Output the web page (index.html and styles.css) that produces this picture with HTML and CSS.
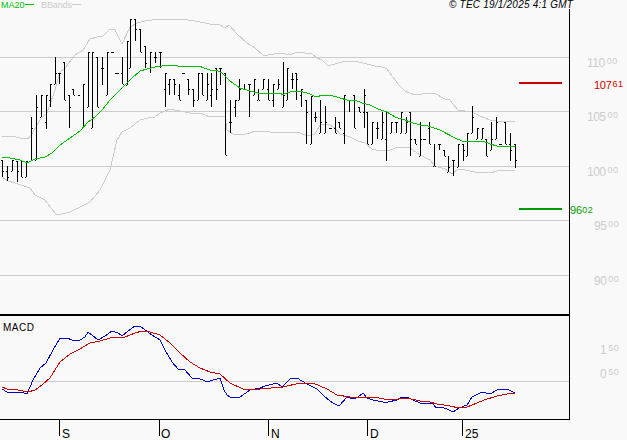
FILE: index.html
```html
<!DOCTYPE html>
<html lang="en">
<head>
<meta charset="utf-8">
<title>Chart</title>
<link rel="stylesheet" href="styles.css">
</head>
<body>
<svg class="chart" width="627" height="440" viewBox="0 0 627 440" xmlns="http://www.w3.org/2000/svg">
  <g class="grid">
    <path d="M0 57.5H569M0 111.5H569M0 166.5H569M0 220.5H569M0 275.5H569M0 381.5H569"/>
  </g>
  <polyline class="band" points="2,137 12,136 20,138 28,139 33,132 40,120 47,113 55,90 60,72 65,68 75,55 83,50 90,39 97,37 103,36 110,29 115,30 122,44 130,27 137,23 145,21 160,19 180,19 195,21 210,24 218,24 225,28 229,25 237,34 247,43 255,48 263,55 268,55 280,53 290,55 297,52 305,53 312,54 317,58 322,60 328,66 335,64 345,61 355,61 367,64 375,66 380,66 387,69 393,77 398,84 405,91 415,95 430,93 434,93 445,99 450,100 453,104 458,110 472,112 480,116 490,120 497,121 515,121"/>
  <polyline class="band" points="2,177 8,181 15,183 30,188 35,195 45,200 50,207 57,215 70,212 90,202 100,190 110,170 117,140 122,132 130,128 140,120 148,118 155,117 160,113 170,109 180,111 190,113 200,113 210,117 220,116 225,116 227,130 233,134 240,135 250,133 255,131 270,132 285,132 300,133 307,136 315,134 320,125 328,124 335,128 340,134 350,137 358,141 365,143 372,149 380,151 390,150 398,147 410,148 420,155 430,160 435,166 445,169 452,174 458,169 465,170 475,172 490,173 497,171 505,170 515,171"/>
  <path class="bars" d="M2.5 160V177M1 160h1M3 171h1M7.500 166V181M6 171h1M8 177h1M12.500 160V171M11 171h1M13 160h1M17.500 161V182M16 161h1M18 171h1M21.500 160V177M20 160h1M22 177h1M26.500 161V177M25 177h1M27 161h1M31.500 117V161M30 161h1M32 128h1M36.500 95V160M35 160h1M37 107h1M41.500 95V117M40 117h1M42 95h1M46.500 95V129M45 122h1M47 95h1M50.500 84V107M49 100h1M51 84h1M55.500 57V84M54 84h1M56 73h1M59.500 73V84M58 73h1M60 73h1M64.500 62V100M63 62h1M65 100h1M69.500 95V128M68 95h1M70 107h1M73.500 89V95M72 89h1M74 95h1M78 95h2M83.500 84V128M82 128h1M84 84h1M88.500 52V107M87 107h1M89 52h1M92.500 52V128M91 128h1M93 52h1M97.500 57V107M96 57h1M98 107h1M102.500 57V85M101 68h1M103 68h1M107.500 52V95M106 95h1M108 52h1M111 52h3M115 73h4M122.500 57V84M121 73h1M123 84h1M127.500 41V85M126 85h1M128 41h1M130.500 19V68M129 68h1M131 19h1M135.500 19V41M134 19h1M136 29h1M140.500 29V52M139 29h1M141 52h1M145.500 46V68M144 46h1M146 63h1M150.500 52V73M149 68h1M151 52h1M155.500 52V63M154 57h1M156 57h1M160.500 52V68M159 52h1M161 52h1M165.500 73V107M164 89h1M166 73h1M169.500 79V95M168 84h1M170 79h1M174.500 79V95M173 79h1M175 84h1M179.500 84V100M178 95h1M180 100h1M182 73h3M188.500 79V95M187 79h1M189 89h1M193.500 89V107M192 89h1M194 100h1M198.500 73V100M197 100h1M199 73h1M202.500 73V95M201 73h1M203 95h1M207.500 73V100M206 100h1M208 84h1M211.500 73V107M210 95h1M212 89h1M216.500 68V100M215 68h1M217 89h1M220.500 68V85M219 68h1M221 68h1M225.500 73V155M224 73h1M226 155h1M230.500 100V133M229 122h1M231 122h1M235.500 100V117M234 107h1M236 100h1M239.500 79V100M238 100h1M240 89h1M244.500 84V89M243 89h1M245 89h1M249.500 84V117M248 84h1M250 84h1M254.500 79V95M253 95h1M255 79h1M258.500 89V100M257 100h1M259 100h1M263.500 79V89M262 89h1M264 79h1M268.500 79V100M267 89h1M269 100h1M273.500 84V107M272 100h1M274 84h1M278.500 79V89M277 89h1M279 84h1M283.500 62V107M282 107h1M284 95h1M287.500 68V100M286 100h1M288 68h1M292.500 73V89M291 79h1M293 79h1M296.500 73V100M295 73h1M297 79h1M301.500 89V107M300 95h1M302 89h1M306.500 100V144M305 100h1M307 112h1M311.500 96V144M310 144h1M312 96h1M315.500 112V122M314 117h1M316 117h1M320.500 100V133M319 133h1M321 122h1M325.500 106V133M324 133h1M326 122h1M329 128h3M335.500 117V133M334 128h1M336 133h1M339.500 122V128M338 122h1M340 128h1M344.500 95V144M343 133h1M345 95h1M349.500 100V112M348 100h1M350 100h1M354.500 95V128M353 95h1M355 128h1M359.500 107V112M358 107h1M360 112h1M364.500 89V128M363 112h1M365 95h1M367.500 112V144M366 112h1M368 144h1M372.500 122V144M371 144h1M373 122h1M377.500 122V139M376 128h1M378 128h1M382.500 112V139M381 139h1M383 122h1M386.500 112V161M385 139h1M387 112h1M391.500 122V133M390 133h1M392 122h1M396.500 122V133M395 122h1M397 122h1M401.500 112V133M400 133h1M402 112h1M406.500 117V133M405 133h1M407 122h1M410.500 112V156M409 112h1M411 139h1M415.500 139V144M414 139h1M416 144h1M420.500 122V156M419 156h1M421 139h1M423 139h3M429.500 122V144M428 128h1M430 144h1M434.500 144V166M433 166h1M435 166h1M439.500 144V150M438 144h1M440 144h1M444.500 150V156M443 150h1M445 156h1M448.500 156V172M447 172h1M449 167h1M453.500 160V176M452 160h1M454 160h1M458.500 144V167M457 167h1M459 144h1M463.500 144V161M462 144h1M464 150h1M467.500 133V156M466 156h1M468 133h1M472.500 106V133M471 133h1M473 117h1M477.500 128V139M476 139h1M478 128h1M482.500 128V139M481 139h1M483 128h1M486.500 139V156M485 139h1M487 156h1M491.500 122V150M490 150h1M492 139h1M496.500 117V139M495 139h1M497 122h1M499 144h3M505.500 122V144M504 122h1M506 144h1M510.500 133V161M509 144h1M511 150h1M515.500 144V168M514 144h1M516 160h1"/>
  <polyline class="ma" points="2,157 10,158 20,160 27,163 35,159 45,157 52,153 60,145 70,138 80,131 88,122 95,117 102,110 110,100 118,92 125,85 132,78 140,71 147,69 155,67 165,65.5 178,66 190,67 200,66.500 210,70 216,70 222,73 230,81 240,88 250,91 258,93 270,93 280,93.500 283,94.500 290,92 300,91 310,94 316,97 323,95 330,95 340,98 347,100 355,100 362,103 370,105 378,109 387,112 395,117 405,120 410,122 420,125 428,126 440,130 455,138 462,141 475,141 483,141 490,144 497,146 515,147"/>
  <path class="level-red" d="M519 82.500H562"/>
  <path class="level-green" d="M519 208.500H562"/>
  <polyline class="macd-blue" points="2,389 7,392 15,392 24,393 27,394 33,380 40,368 46,363 53,350 60,338 67,338 72,340 80,340 85,337 88,332 92,335 98,340 105,336 112,331 118,333 122,336 128,331 135,326 140,326 145,330 152,335 160,340 165,350 172,362 178,369 184,369 192,378 198,378 205,381 210,381 220,378 224,390 227,395 230,397 240,397 250,390 255,389 260,388 265,386 277,383 282,387 290,379 297,378 307,384 317,389 325,397 333,403 339,406 347,397 353,399 358,397 363,393 367,398 373,400 383,402 388,402 397,400 402,397 407,397 413,400 420,403 433,403 436,408 442,407 449,410 453,412 459,408 467,405 472,397 482,392 490,394 497,390 507,389 515,393"/>
  <polyline class="macd-red" points="2,387 7,389 18,390 28,392 35,390 42,385 50,378 60,362 70,354 78,350 90,343 100,341 110,338 125,337 135,333 142,331 150,332 160,335 170,343 180,353 190,362 200,368 210,372 220,374 230,383 243,389 260,389 283,387 300,383 313,383 327,389 337,395 350,397 373,397 390,400 407,398 420,401 430,402 437,404 450,406 459,408 467,407 477,403 484,400 497,396 507,394 515,393"/>
  <path class="axis" d="M569.500 9V419.500H0M59.500 419V436M159.500 419V436M268.500 419V436M367.500 419V436M462.500 419V436"/>
  <path class="divider" d="M0 315H569"/>
  <path class="legend-ma" d="M25 4.500H34"/>
  <path class="legend-bb" d="M72 4.500H81"/>
  <text class="t-ma" x="1" y="8">MA20</text>
  <text class="t-bb" x="41" y="8">BBands</text>
  <text class="t-copy" x="449" y="8">© TEC 19/1/2025 4:1 GMT</text>
  <text class="t-macd" x="3" y="331">MACD</text>
  <text class="t-x" x="62" y="438">S</text>
  <text class="t-x" x="161" y="438">O</text>
  <text class="t-x" x="271" y="438">N</text>
  <text class="t-x" x="370" y="438">D</text>
  <text class="t-x" x="465" y="438">25</text>
  <g class="t-price">
    <text x="587" y="67">110<tspan class="small" dy="-3" dx="2">00</tspan></text>
    <text x="587" y="121">105<tspan class="small" dy="-3" dx="2">00</tspan></text>
    <text x="587" y="176">100<tspan class="small" dy="-3" dx="2">00</tspan></text>
    <text x="594" y="230">95<tspan class="small" dy="-3" dx="2">00</tspan></text>
    <text x="594" y="285">90<tspan class="small" dy="-3" dx="2">00</tspan></text>
    <text x="600" y="354">1<tspan class="small" dy="-3" dx="2">50</tspan></text>
    <text x="600" y="378">0<tspan class="small" dy="-3" dx="2">50</tspan></text>
  </g>
  <text class="t-red" x="594" y="89">107<tspan class="small" dy="-2" dx="1">61</tspan></text>
  <text class="t-green" x="570" y="214">96<tspan class="small" dy="-1">02</tspan></text>
</svg>
</body>
</html>
```
FILE: styles.css
```css
html, body {
  margin: 0;
  padding: 0;
  background: #f9f9f9;
}
.chart {
  display: block;
  font-family: "Liberation Sans", Arial, sans-serif;
}
.grid path {
  fill: none;
  stroke: #cccccc;
  stroke-width: 1;
  shape-rendering: crispEdges;
}
.band {
  fill: none;
  stroke: #cccccc;
  stroke-width: 1;
  shape-rendering: crispEdges;
}
.bars {
  fill: none;
  stroke: #000000;
  stroke-width: 1;
  shape-rendering: crispEdges;
}
.ma {
  fill: none;
  stroke: #00c000;
  stroke-width: 1;
  shape-rendering: crispEdges;
}
.level-red {
  stroke: #cc0000;
  stroke-width: 2;
  shape-rendering: crispEdges;
}
.level-green {
  stroke: #009900;
  stroke-width: 2;
  shape-rendering: crispEdges;
}
.macd-blue {
  fill: none;
  stroke: #0000cc;
  stroke-width: 1;
  shape-rendering: crispEdges;
}
.macd-red {
  fill: none;
  stroke: #cc0000;
  stroke-width: 1;
  shape-rendering: crispEdges;
}
.axis {
  fill: none;
  stroke: #000000;
  stroke-width: 1;
  shape-rendering: crispEdges;
}
.divider {
  stroke: #000000;
  stroke-width: 2;
  shape-rendering: crispEdges;
}
.legend-ma {
  stroke: #00c000;
  stroke-width: 1;
  shape-rendering: crispEdges;
}
.legend-bb {
  stroke: #cccccc;
  stroke-width: 1;
  shape-rendering: crispEdges;
}
.t-ma {
  font-size: 9px;
  fill: #00c000;
}
.t-bb {
  font-size: 9px;
  letter-spacing: -0.1px;
  fill: #cccccc;
}
.t-copy {
  font-size: 10px;
  font-style: italic;
  letter-spacing: 0.22px;
  fill: #000000;
}
.t-macd {
  font-size: 10px;
  letter-spacing: 0.5px;
  fill: #000000;
}
.t-x {
  font-size: 12px;
  fill: #000000;
}
.t-price {
  font-size: 12px;
  letter-spacing: -0.5px;
  fill: #cccccc;
}
.t-red {
  font-size: 11px;
  letter-spacing: -0.3px;
  fill: #cc0000;
}
.t-green {
  font-size: 11px;
  fill: #009900;
}
.small {
  font-size: 9px;
  letter-spacing: 0.5px;
}
```
